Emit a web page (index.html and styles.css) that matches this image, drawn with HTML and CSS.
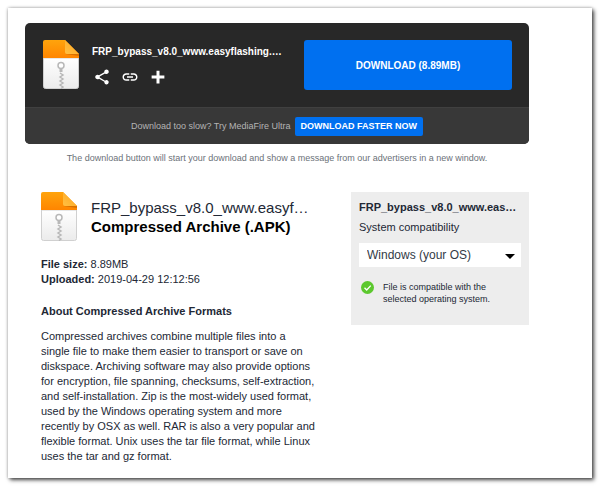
FILE: index.html
```html
<!DOCTYPE html>
<html lang="en">
<head>
  <meta charset="UTF-8">
  <meta name="viewport" content="width=device-width, initial-scale=1.0">
  <title>FRP_bypass_v8.0_www.easyflashing.com</title>
  <link rel="stylesheet" href="styles.css">
</head>
<body>

  <!-- Shared icons -->
  <svg class="sprite" width="0" height="0" aria-hidden="true">
    <defs>
      <linearGradient id="orange" x1="0" y1="0" x2="0" y2="1">
        <stop offset="0" stop-color="#ffa40c"/>
        <stop offset="1" stop-color="#ff8500"/>
      </linearGradient>
      <linearGradient id="paper" x1="0" y1="0" x2="0" y2="1">
        <stop offset="0" stop-color="#ffffff"/>
        <stop offset="1" stop-color="#ebebeb"/>
      </linearGradient>
      <linearGradient id="fold" x1="0" y1="1" x2="1" y2="0">
        <stop offset="0" stop-color="#ffc044"/>
        <stop offset="1" stop-color="#ffa31a"/>
      </linearGradient>
    </defs>
    <symbol id="zip-file" viewBox="0 0 36 49">
      <path d="M.5 18h35v28.500a2 2 0 0 1-2 2h-31a2 2 0 0 1-2-2z" fill="url(#paper)" stroke="#d0d0d0"/>
      <path d="M0 18V2a2 2 0 0 1 2-2h20l14 14v4z" fill="url(#orange)"/>
      <path d="M22 14h14v2z" fill="#d87000"/>
      <path d="M22 0l14 14H24a2 2 0 0 1-2-2z" fill="url(#fold)"/>
      <circle cx="18" cy="25.500" r="3" fill="#fff" stroke="#b8b8b8" stroke-width="1.500"/>
      <path d="M18 29v3" stroke="#b8b8b8" stroke-width="3"/>
      <path d="M17 33l3 2-3 2 3 2-3 2 3 2-3 2 3 2-2 1.500" fill="none" stroke="#b8b8b8" stroke-width="1.500"/>
    </symbol>
  </svg>

  <div class="page">

    <!-- Download box -->
    <section class="download-box">
      <div class="download-main">
        <svg class="file-icon"><use href="#zip-file"/></svg>
        <div class="download-info">
          <div class="download-name">FRP_bypass_v8.0_www.easyflashing.…</div>
          <div class="actions">
            <button type="button" aria-label="Share">
              <svg viewBox="0 0 24 24"><path fill="#fff" d="M18 16.080c-.76 0-1.440.3-1.960.77L8.910 12.700c.05-.23.09-.46.09-.7s-.04-.47-.09-.7l7.050-4.110c.54.5 1.250.81 2.040.81 1.660 0 3-1.340 3-3s-1.340-3-3-3-3 1.340-3 3c0 .24.04.47.09.7L8.040 9.810C7.500 9.310 6.790 9 6 9c-1.660 0-3 1.340-3 3s1.340 3 3 3c.79 0 1.500-.31 2.040-.81l7.120 4.160c-.05.21-.08.43-.08.65 0 1.610 1.310 2.920 2.920 2.920s2.920-1.310 2.920-2.920-1.310-2.920-2.920-2.920z"/></svg>
            </button>
            <button type="button" aria-label="Copy link">
              <svg viewBox="0 0 24 24"><path fill="#fff" d="M3.900 12c0-1.710 1.390-3.100 3.100-3.100h4V7H7c-2.760 0-5 2.240-5 5s2.240 5 5 5h4v-1.900H7c-1.710 0-3.100-1.390-3.100-3.100zM8 13h8v-2H8v2zm9-6h-4v1.900h4c1.710 0 3.100 1.390 3.100 3.100s-1.390 3.100-3.100 3.100h-4V17h4c2.760 0 5-2.240 5-5s-2.240-5-5-5z"/></svg>
            </button>
            <button type="button" aria-label="Save">
              <svg viewBox="0 0 24 24"><path d="M12 3.500v17M3.500 12h17" stroke="#fff" stroke-width="4"/></svg>
            </button>
          </div>
        </div>
        <button class="download-button" type="button">DOWNLOAD (8.89MB)</button>
      </div>
      <div class="download-faster">
        <span>Download too slow? Try MediaFire Ultra</span>
        <a href="#">DOWNLOAD FASTER NOW</a>
      </div>
    </section>
    <p class="note">The download button will start your download and show a message from our advertisers in a new window.</p>

    <div class="content">
      <!-- File details -->
      <main class="details">
        <div class="file-header">
          <svg class="file-icon"><use href="#zip-file"/></svg>
          <div class="file-title">
            <h1>FRP_bypass_v8.0_www.easyf…</h1>
            <h2>Compressed Archive (.APK)</h2>
          </div>
        </div>
        <ul class="file-meta">
          <li><b>File size:</b> 8.89MB</li>
          <li><b>Uploaded:</b> 2019-04-29 12:12:56</li>
        </ul>
        <h3>About Compressed Archive Formats</h3>
        <p>Compressed archives combine multiple files into a single file to make them easier to transport or save on diskspace. Archiving software may also provide options for encryption, file spanning, checksums, self-extraction, and self-installation. Zip is the most-widely used format, used by the Windows operating system and more recently by OSX as well. RAR is also a very popular and flexible format. Unix uses the tar file format, while Linux uses the tar and gz format.</p>
      </main>

      <!-- Compatibility panel -->
      <aside class="compat">
        <h4>FRP_bypass_v8.0_www.eas…</h4>
        <label for="os">System compatibility</label>
        <div class="select">
          <select id="os">
            <option>Windows (your OS)</option>
          </select>
        </div>
        <div class="compat-result">
          <svg viewBox="0 0 24 24"><circle cx="12" cy="12" r="12" fill="#5cc82e"/><path d="M6.500 12.500l4 4 7.500-8" fill="none" stroke="#fff" stroke-width="2.500"/></svg>
          <span>File is compatible with the selected operating system.</span>
        </div>
      </aside>
    </div>

  </div>

</body>
</html>
```
FILE: styles.css
```css
* {
  box-sizing: border-box;
}

body {
  margin: 0;
  padding: 8px;
  font-family: "Liberation Sans", Arial, sans-serif;
  font-size: 11px;
  line-height: 15px;
  color: #222835;
  background-color: #fff;
}

h1, h2, h3, h4, p, ul {
  margin: 0;
  padding: 0;
}

button {
  border: 0;
  font-family: inherit;
  cursor: pointer;
}

.sprite {
  position: absolute;
}

.page {
  padding: 15px 63px 14px 17px;
  background-color: #fff;
  box-shadow: 2px 2px 4px rgba(0, 0, 0, 0.7), 0 0 3px rgba(0, 0, 0, 0.3);
}

.file-icon {
  flex: none;
  width: 36px;
  height: 49px;
}

/* Download box */
.download-box {
  border-radius: 5px;
  background-color: #282828;
  overflow: hidden;
}

.download-main {
  display: flex;
  padding: 17px 17px 17px 18px;
}

.download-info {
  flex: 1;
  min-width: 0;
  padding: 4px 16px 0 13px;
}

.download-name {
  font-size: 10px;
  font-weight: bold;
  color: #fff;
  white-space: nowrap;
}

.actions {
  display: flex;
  gap: 10px;
  padding: 9px 0 0 1px;
}

.actions button {
  padding: 0;
  background: none;
}

.actions svg {
  display: block;
  width: 18px;
  height: 18px;
}

.download-button {
  width: 208px;
  height: 50px;
  border-radius: 3px;
  background-color: #0070f0;
  color: #fff;
  font-size: 10px;
  font-weight: bold;
}

.download-faster {
  display: flex;
  align-items: center;
  justify-content: center;
  gap: 4px;
  height: 37px;
  border-top: 1px solid #404040;
  background-color: #383838;
  color: #b4b4b4;
  font-size: 9px;
}

.download-faster a {
  padding: 2px 6px;
  border-radius: 2px;
  background-color: #0070f0;
  color: #fff;
  font-weight: bold;
  text-decoration: none;
}

.note {
  padding-top: 7px;
  color: #6b7178;
  font-size: 9px;
  text-align: center;
}

/* Content */
.content {
  display: flex;
  align-items: flex-start;
  justify-content: space-between;
  padding: 26px 0 0 16px;
}

.details {
  width: 57%;
}

.details p {
  padding-right: 3px;
}

.file-header {
  display: flex;
  gap: 14px;
}

.file-title {
  min-width: 0;
  padding-top: 6px;
}

.file-title h1,
.file-title h2 {
  font-size: 15px;
  line-height: 19px;
  white-space: nowrap;
}

.file-title h1 {
  font-weight: normal;
}

.file-title h2 {
  color: #000;
}

.file-meta {
  padding: 16px 0 17px;
  list-style: none;
}

.details h3 {
  padding-bottom: 10px;
  font-size: 11px;
}

/* Compatibility panel */
.compat {
  width: 178px;
  min-height: 133px;
  padding: 8px;
  background-color: #ededed;
}

.compat h4 {
  padding-bottom: 5px;
  font-size: 11px;
  white-space: nowrap;
}

.compat label {
  display: block;
}

.select {
  position: relative;
  margin-top: 8px;
}

.select::after {
  content: "";
  position: absolute;
  top: 11px;
  right: 6px;
  border: 5px solid transparent;
  border-top-color: #000;
  border-bottom: 0;
  pointer-events: none;
}

.select select {
  display: block;
  width: 100%;
  height: 24px;
  padding: 0 8px;
  border: 0;
  border-radius: 0;
  appearance: none;
  background-color: #fff;
  color: #333a46;
  font-family: inherit;
  font-size: 12px;
}

.compat-result {
  display: flex;
  gap: 9px;
  padding: 14px 20px 0 2px;
  font-size: 9px;
  line-height: 12px;
}

.compat-result svg {
  flex: none;
  width: 13px;
  height: 13px;
}
```
